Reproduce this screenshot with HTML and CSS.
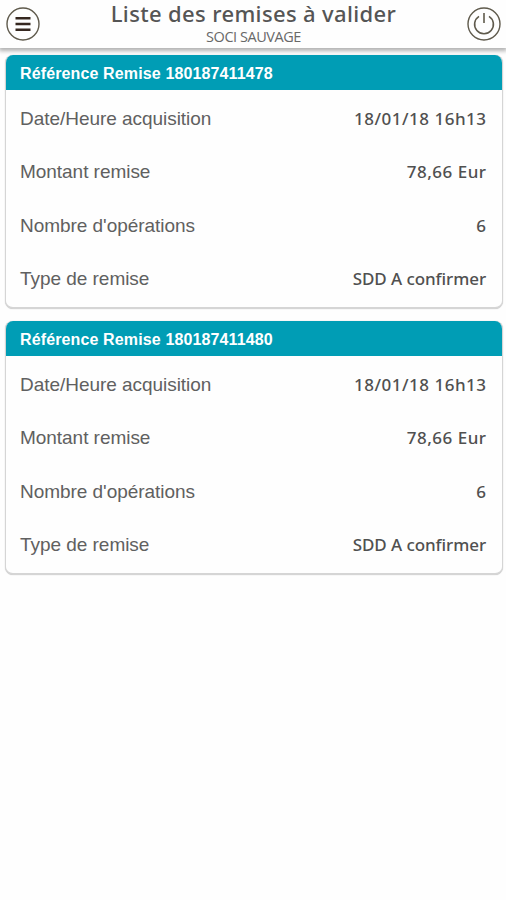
FILE: index.html
```html
<!DOCTYPE html>
<html lang="fr">
<head>
<meta charset="utf-8">
<title>Liste des remises à valider</title>
<link rel="stylesheet" href="styles.css">
</head>
<body>
<header class="topbar">
  <svg class="icon" viewBox="0 0 36 36" role="img" aria-label="Menu">
    <circle class="ring" cx="18" cy="18" r="16"/>
    <path class="bars" d="M10.5 12.2h15M10.5 18h15M10.5 23.8h15"/>
  </svg>
  <div class="heading">
    <h1 class="title">Liste des remises à valider</h1>
    <p class="subtitle">SOCI SAUVAGE</p>
  </div>
  <svg class="icon" viewBox="0 0 36 36" role="img" aria-label="Déconnexion">
    <circle class="ring" cx="18" cy="18" r="16"/>
    <path class="power" d="M18 7v10M13 10.4a9.4 9.4 0 1 0 10 0"/>
  </svg>
</header>
<main class="list">
  <section class="card">
    <h2 class="card-head">Référence Remise 180187411478</h2>
    <dl class="rows">
      <div class="row"><dt class="label">Date/Heure acquisition</dt><dd class="value numeric">18/01/18 16h13</dd></div>
      <div class="row"><dt class="label">Montant remise</dt><dd class="value numeric">78,66 Eur</dd></div>
      <div class="row"><dt class="label">Nombre d'opérations</dt><dd class="value">6</dd></div>
      <div class="row"><dt class="label">Type de remise</dt><dd class="value">SDD A confirmer</dd></div>
    </dl>
  </section>
  <section class="card">
    <h2 class="card-head">Référence Remise 180187411480</h2>
    <dl class="rows">
      <div class="row"><dt class="label">Date/Heure acquisition</dt><dd class="value numeric">18/01/18 16h13</dd></div>
      <div class="row"><dt class="label">Montant remise</dt><dd class="value numeric">78,66 Eur</dd></div>
      <div class="row"><dt class="label">Nombre d'opérations</dt><dd class="value">6</dd></div>
      <div class="row"><dt class="label">Type de remise</dt><dd class="value">SDD A confirmer</dd></div>
    </dl>
  </section>
</main>
</body>
</html>
```
FILE: styles.css
```css
* { box-sizing: border-box; margin: 0; padding: 0; }
body { background: #fefefe; min-height: 900px; color: #4a4a4a; font-family: "Liberation Sans", Arial, sans-serif; }
.topbar {
  height: 48px;
  padding: 0 4px 0 5px;
  display: flex;
  justify-content: space-between;
  align-items: center;
  background: #fefefe;
  box-shadow: 0 2px 4px 1px rgba(0, 0, 0, .3);
}
.icon { width: 36px; height: 36px; flex: none; fill: none; }
.ring { stroke: #5f5a4c; stroke-width: 1.4; }
.bars { stroke: #35271f; stroke-width: 2.6; }
.power { stroke: #5f5a4c; stroke-width: 1.6; }
.heading { align-self: stretch; text-align: center; font-family: "Noto Sans", sans-serif; white-space: nowrap; }
.title { font-size: 22px; line-height: 26px; font-weight: 500; letter-spacing: .36px; color: #555; }
.subtitle { padding-top: 1px; font-family: "Open Sans", sans-serif; font-size: 14.5px; line-height: 19px; letter-spacing: -.45px; color: #686868; }
.list { padding: 7px 3px 0 5px; display: grid; gap: 12px; }
.card {
  height: 254px;
  border: solid #d5d5d5;
  border-width: 0 1px 2px;
  border-radius: 8px;
  background: #fefefe;
  box-shadow: 0 0 1px #bbb;
  overflow: hidden;
}
.card-head { height: 35px; padding: 1px 14px 0; background: #009db5; color: #fff; font-size: 16px; line-height: 35px; font-weight: 700; letter-spacing: .13px; }
.rows { padding-top: 2px; }
.row { height: 53.3px; padding: 0 16px 0 14px; display: flex; align-items: center; justify-content: space-between; }
.label { padding-top: 1px; font-size: 19px; letter-spacing: -.04px; color: #606060; }
.value { font-family: "Noto Sans", sans-serif; font-size: 17px; font-weight: 500; letter-spacing: -.08px; color: #505050; }
.numeric { margin-right: -.5px; letter-spacing: .5px; }
```
